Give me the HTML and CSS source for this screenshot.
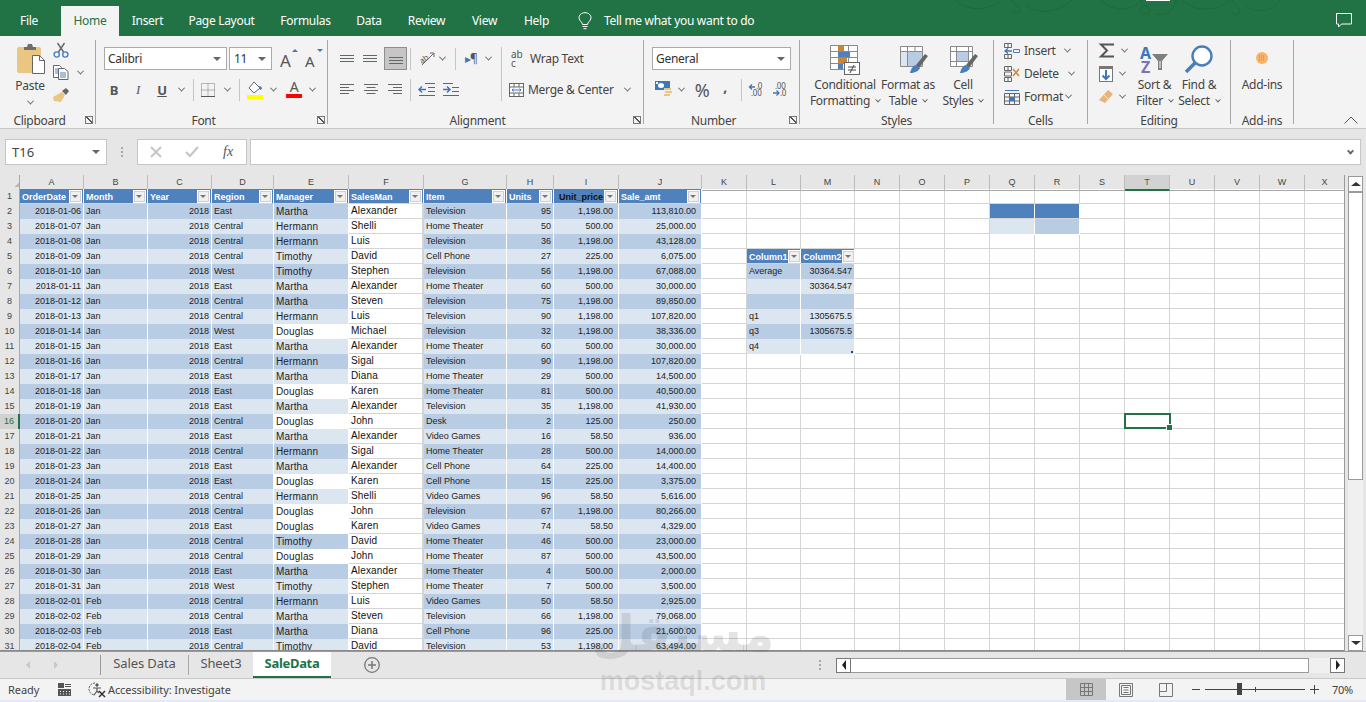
FILE: index.html
```html
<!DOCTYPE html>
<html lang="en">
<head>
<meta charset="utf-8">
<title>SaleData - Excel</title>
<link rel="stylesheet" href="styles.css">
</head>
<body>
<header class="titlebar">
  <nav class="tabs-top">
    <span class="tt">File</span><span class="tt on">Home</span><span class="tt">Insert</span><span class="tt">Page Layout</span><span class="tt">Formulas</span><span class="tt">Data</span><span class="tt">Review</span><span class="tt">View</span><span class="tt">Help</span>
  </nav>
  <div class="tell">
    <svg width="14" height="18" viewBox="0 0 14 18" fill="none" stroke="#fff"><path d="M4.5 12.5C4.5 10 1 9 1 5.8 1 2.8 3.6.7 7 .7s6 2.1 6 5.100C13 9 9.500 10 9.500 12.500ZM4.500 14.500h5M5.500 16.700h3"/></svg>
    <span>Tell me what you want to do</span>
  </div>
  <svg class="swirl" width="400" height="16" viewBox="0 0 400 16" fill="none" stroke="#1c6a3e"><path d="M6 0c8 10 28 12 44 2M62 0c2 6 8 6 8 10s-6 4-6 0M76 4c4 9 30 12 46-4M150 0c14 12 30 12 42 0M190 0c2 6 8 6 10 10 0 5-8 6-10 0 0-3 3-5 8-4M206 14c8 2 18-2 20-14M232 0c10 10 32 14 48 0M282 0c2 6 8 6 8 11s-8 4-8 0M296 6c10 8 28 6 34-6"/></svg>
  <i class="sliver"></i>
  <svg class="comment" width="16" height="15" viewBox="0 0 16 15" fill="none" stroke="#fff"><path d="M.5.500h15v10.500H5.500L2.500 14v-3h-2Z"/></svg>
</header>

<section class="ribbon">
  <div class="group g-clip">
    <div class="body clip-body">
      <div class="paste">
        <svg width="30" height="31" viewBox="0 0 30 31"><rect x="2" y="4" width="24" height="26" rx="2" fill="#e9c682"/><path d="M9 4h3l1-3h4l1 3h3v3H9Z" fill="#6e6e6e"/><path d="M17.500 12.500h7l5 5v13h-12Z" fill="#fff" stroke="#666"/><path d="M24.500 12.500v5h5" fill="none" stroke="#666"/></svg>
        <span>Paste</span><i class="car"></i>
      </div>
      <div class="stack clip-stack">
        <div class="si"><svg width="16" height="16" viewBox="0 0 16 16" fill="none"><path d="M4.500 1 10.500 10M11.500 1 5.500 10" stroke="#666" stroke-width="1.400"/><circle cx="3.700" cy="12.500" r="2.600" stroke="#4a7ebb" stroke-width="1.400"/><circle cx="12.300" cy="12.500" r="2.600" stroke="#4a7ebb" stroke-width="1.400"/></svg></div>
        <div class="si"><svg width="16" height="15" viewBox="0 0 16 15" fill="none" stroke="#666"><path d="M.5.500h6l2 2v10h-8Z" fill="#fff"/><path d="M5.500 3.500h6l3.500 3v8h-9.500Z" fill="#fff"/><path d="M7 8h6M7 10h6M7 12h6" stroke="#4a7ebb"/><path d="M2 4h3M2 6h3M2 8h3" stroke="#4a7ebb"/></svg><i class="car car-copy"></i></div>
        <div class="si"><svg width="17" height="15" viewBox="0 0 17 15"><path d="M9 4 12 7 8 14 1 13 0 9Z" fill="#e9c682"/><path d="M9 3 13 0l3 3-3 4Z" fill="#666"/></svg></div>
      </div>
    </div>
    <div class="glabel lb"><span></span><span>Clipboard</span><i class="launch"></i></div>
  </div>

  <div class="group g-font">
    <div class="body col-rows">
      <div class="r1 font-r1">
        <div class="sel"><span>Calibri</span><i class="tri"></i></div>
        <div class="sel"><span>11</span><i class="tri"></i></div>
        <span class="growA">A<i class="up"></i></span>
        <span class="growA small">A<i class="dn"></i></span>
      </div>
      <div class="r2 font-r2">
        <b class="fb">B</b><i class="fi">I</i><u class="fu">U</u><i class="car"></i><i class="vs"></i>
        <svg width="14" height="14" viewBox="0 0 14 14" fill="none" stroke="#777" stroke-dasharray="1 1"><path d="M.5.500h13v13H.5ZM7 .5v13M.5 7h13"/><path d="M0 13.500h14" stroke="#555" stroke-dasharray="none"/></svg><i class="car"></i><i class="vs"></i>
        <svg width="16" height="18" viewBox="0 0 16 18"><path d="M7 1 13 7 7 12 2 7Z" fill="#fff" stroke="#666"/><path d="M12 5c2 0 3 1 3 3l-2 1Z" fill="#4a7ebb"/><rect y="14" width="16" height="4" fill="#ffff00"/></svg><i class="car"></i>
        <span class="fcolor">A</span><i class="car"></i>
      </div>
    </div>
    <div class="glabel lb"><span></span><span>Font</span><i class="launch"></i></div>
  </div>

  <div class="group g-align">
    <div class="body align-body">
      <div class="col-rows align-left">
        <div class="r1 al-r1">
          <svg class="lines" width="14" height="8" viewBox="0 0 14 8"><path d="M0 .5h14M0 3.500h14M0 6.500h14" stroke="#666"/></svg>
          <svg class="lines" width="14" height="8" viewBox="0 0 14 8"><path d="M0 .5h14M0 3.500h14M0 6.500h14" stroke="#666"/></svg>
          <div class="pressed"><svg width="14" height="8" viewBox="0 0 14 8"><path d="M0 .5h14M0 3.500h14M0 6.500h14" stroke="#666"/></svg></div>
          <i class="vs"></i>
          <svg width="17" height="15" viewBox="0 0 17 15"><text x="1" y="10" transform="rotate(-35 7 7)" class="svgt">ab</text><path d="M4 14 15 3M12 2h4v4" fill="none" stroke="#666"/></svg>
          <i class="car"></i><i class="vs"></i>
          <span class="rtl"><span class="rtl-a">&#9656;</span>&para;</span><i class="car"></i>
        </div>
        <div class="r2 al-r2">
          <svg width="14" height="11" viewBox="0 0 14 11"><path d="M0 .5h14M0 3.500h9M0 6.500h14M0 9.500h9" stroke="#666"/></svg>
          <svg width="14" height="11" viewBox="0 0 14 11"><path d="M0 .5h14M2.500 3.500h9M0 6.500h14M2.500 9.500h9" stroke="#666"/></svg>
          <svg width="14" height="11" viewBox="0 0 14 11"><path d="M0 .5h14M5 3.500h9M0 6.500h14M5 9.500h9" stroke="#666"/></svg>
          <i class="vs"></i>
          <svg width="16" height="13" viewBox="0 0 16 13"><path d="M6 .5h10M9 4.500h7M9 8.500h7M0 12.500h16" stroke="#666"/><path d="M0 6.500h7M3 3.500l-3 3 3 3" fill="none" stroke="#3f78b8" stroke-width="1.500"/></svg>
          <svg width="16" height="13" viewBox="0 0 16 13"><path d="M0 .5h10M9 4.500h7M9 8.500h7M0 12.500h16" stroke="#666"/><path d="M0 6.500h7M4 3.500l3 3-3 3" fill="none" stroke="#3f78b8" stroke-width="1.500"/></svg>
        </div>
      </div>
      <i class="vs big"></i>
      <div class="col-rows align-right">
        <div class="r1 txtbtn"><span class="wrapi">ab<br>c</span><span>Wrap Text</span></div>
        <div class="r2 txtbtn mergebtn"><svg width="15" height="14" viewBox="0 0 15 14" fill="none" stroke="#666"><rect x=".5" y=".5" width="14" height="13" fill="#fff"/><path d="M.5 4h14M.5 10h14M5 .5V4M10 .5V4M5 10v3.500M10 10v3.500"/><path d="M3 7h9M4.500 5.500 3 7l1.500 1.500M10.500 5.500 12 7l-1.500 1.500" stroke="#3f78b8"/></svg><span>Merge &amp; Center</span><i class="car"></i></div>
      </div>
    </div>
    <div class="glabel lb"><span></span><span>Alignment</span><i class="launch"></i></div>
  </div>

  <div class="group g-num">
    <div class="body col-rows">
      <div class="r1"><div class="sel numsel"><span>General</span><i class="tri"></i></div></div>
      <div class="r2 num-r2">
        <svg width="17" height="17" viewBox="0 0 17 17"><rect width="15" height="9" fill="#3f78b8"/><ellipse cx="6" cy="4.500" rx="3" ry="2.500" fill="#fff"/><rect x="1" y="1" width="2" height="2" fill="#fff"/><path d="M9 7h7v2H9ZM10 10h7v2h-7ZM9 13h6v2H9Z" fill="#e9c682"/></svg>
        <i class="car"></i><span class="pct">%</span><b class="cma">,</b><i class="vs"></i>
        <svg width="15" height="14" viewBox="0 0 15 14"><text x="7" y="6" class="svgt">.0</text><text x="2" y="13" class="svgt">.00</text><path d="M0 4h6M3 1.500.5 4 3 6.500" fill="none" stroke="#3f78b8" stroke-width="1.300"/></svg>
        <svg width="15" height="14" viewBox="0 0 15 14"><text x="2" y="6" class="svgt">.00</text><text x="7" y="13" class="svgt">.0</text><path d="M0 10h6M3.500 7.500 6 10l-2.500 2.500" fill="none" stroke="#3f78b8" stroke-width="1.300"/></svg>
      </div>
    </div>
    <div class="glabel lb"><span></span><span>Number</span><i class="launch"></i></div>
  </div>

  <div class="group g-styles">
    <div class="body big-row">
      <div class="big b-cond">
        <svg width="30" height="30" viewBox="0 0 30 30"><path d="M.5.500h27v24H.5ZM9.500.5v24M18.500.5v24M.5 6.500h27M.5 12.500h27M.5 18.500h27" fill="#fff" stroke="#8a8a8a"/><rect x="8" y="1" width="6" height="5" fill="#c8863c"/><rect x="8" y="7" width="12" height="5" fill="#4f81bd"/><rect x="8" y="13" width="9" height="5" fill="#c8863c"/><rect x="8" y="19" width="5" height="5" fill="#4f81bd"/><rect x="14.500" y="17.500" width="15" height="12" fill="#fff" stroke="#666"/><path d="M18 22h8M18 25h8M24 20l-4 8" stroke="#444" fill="none"/></svg>
        <span>Conditional</span><span>Formatting<i class="car"></i></span>
      </div>
      <div class="big b-table">
        <svg width="30" height="30" viewBox="0 0 30 30"><path d="M2.500 1.500h22v20h-22ZM9.500 1.500v20M17 1.500v20M2.500 6.500h22M2.500 11.500h22M2.500 16.500h22" fill="#fff" stroke="#8a8a8a"/><rect x="10" y="7" width="14" height="14" fill="#b8cce4"/><rect x="3" y="7" width="6" height="14" fill="#dce6f1"/><path d="M18 20 27 9l3 2-9 12Z" fill="#666"/><path d="M18 20c-2 0-5 3-6 8 4 0 9-2 10-5Z" fill="#4a7ebb"/></svg>
        <span>Format as</span><span>Table<i class="car"></i></span>
      </div>
      <div class="big b-cell">
        <svg width="30" height="30" viewBox="0 0 30 30"><path d="M2.500 1.500h22v20h-22Z" fill="#fff" stroke="#8a8a8a"/><path d="M2.500 6.500h22M2.500 16.500h22M8.500 1.500v20M20.500 1.500v20" stroke="#8a8a8a"/><rect x="9" y="7" width="11" height="9" fill="#b8cce4"/><path d="M18 20 27 9l3 2-9 12Z" fill="#666"/><path d="M18 20c-2 0-5 3-6 8 4 0 9-2 10-5Z" fill="#4a7ebb"/></svg>
        <span>Cell</span><span>Styles<i class="car"></i></span>
      </div>
    </div>
    <div class="glabel"><span></span><span>Styles</span><span></span></div>
  </div>

  <div class="group g-cells">
    <div class="body stack cells-stack">
      <div class="si"><svg width="16" height="16" viewBox="0 0 16 16" fill="none" stroke="#666"><path d="M.5.500h7v4h-7ZM.5 11.500h7v4h-7ZM4 .5v4M4 11.500v4"/><path d="M9.500 6.500h6v3h-6Z" stroke="#4a7ebb"/><path d="M1 8h7M4 5.500 1 8l3 2.500" stroke="#3f78b8" stroke-width="1.300"/></svg><span>Insert</span><i class="car c-ins"></i></div>
      <div class="si"><svg width="16" height="16" viewBox="0 0 16 16" fill="none" stroke="#666"><path d="M.5.500h7v4h-7ZM.5 11.500h7v4h-7ZM4 .5v4M4 11.500v4M.5 6h7v4h-7Z"/><path d="M9 3l6 7M15 3l-6 7" stroke="#d5843a" stroke-width="1.500"/></svg><span>Delete</span><i class="car c-del"></i></div>
      <div class="si"><svg width="16" height="16" viewBox="0 0 16 16" fill="none" stroke="#666"><path d="M.5 4.500h15v11H.5ZM.5 8h15M.5 12h15M5.500 4.500v11M10.500 4.500v11"/><rect x="5" y="8" width="6" height="4" fill="#3f78b8" stroke="none"/><path d="M1 1.500h14" stroke="#3f78b8"/></svg><span>Format</span><i class="car c-fmt"></i></div>
    </div>
    <div class="glabel"><span></span><span>Cells</span><span></span></div>
  </div>

  <div class="group g-edit">
    <div class="body big-row">
      <div class="stack edit-stack">
        <div class="si"><svg width="16" height="15" viewBox="0 0 16 15" fill="none"><path d="M15 1.500H2L8 7.500 2 13.500H15" stroke="#555" stroke-width="2"/></svg><i class="car c-sum"></i></div>
        <div class="si"><svg width="14" height="16" viewBox="0 0 14 16"><rect width="14" height="4" fill="#777"/><rect x=".5" y="2.500" width="13" height="13" fill="#fff" stroke="#777"/><path d="M7 4v9M3.500 9.500 7 13l3.500-3.500" fill="none" stroke="#3f78b8" stroke-width="2"/></svg><i class="car c-fil"></i></div>
        <div class="si"><svg width="14" height="14" viewBox="0 0 14 14"><path d="M9 0 14 4 6 13 0 10Z" fill="#e8b47e"/><path d="M5 5 9 9" stroke="#f3f3f3"/></svg><i class="car c-fil"></i></div>
      </div>
      <div class="big b-sort">
        <svg width="32" height="30" viewBox="0 0 32 30"><text x="1" y="14" class="az a">A</text><text x="2" y="28" class="az z">Z</text><path d="M13 9h16l-6 7v9h-4v-9Z" fill="#7f7f7f"/><path d="M21 16v7" stroke="#fff"/></svg>
        <span>Sort &amp;</span><span>Filter<i class="car"></i></span>
      </div>
      <div class="big b-find">
        <svg width="30" height="30" viewBox="0 0 30 30" fill="none" stroke="#4a7ebb"><circle cx="18" cy="11" r="9.500" stroke-width="2.400" fill="#fff"/><path d="M11 18 2 27" stroke-width="3.500"/></svg>
        <span>Find &amp;</span><span>Select<i class="car"></i></span>
      </div>
    </div>
    <div class="glabel"><span></span><span>Editing</span><span></span></div>
  </div>

  <div class="group g-add">
    <div class="body big-row">
      <div class="big b-add">
        <svg width="30" height="30" viewBox="0 0 30 30"><circle cx="15" cy="13" r="6" fill="#f9b366"/><path d="M12 11h6M12 13h6M12 15h6" stroke="#d5843a" stroke-dasharray="1 1"/></svg>
        <span>Add-ins</span>
      </div>
    </div>
    <div class="glabel"><span></span><span>Add-ins</span><span></span></div>
  </div>

  <svg class="collapse" width="14" height="8" viewBox="0 0 14 8" fill="none" stroke="#555"><path d="M.5 7.500 7 1l6.500 6.500"/></svg>
</section>

<section class="fbar">
  <div class="namebox"><span>T16</span><i class="tri"></i></div>
  <div class="dots"><i></i><i></i><i></i></div>
  <div class="fxbox">
    <svg width="12" height="12" viewBox="0 0 12 12" stroke="#c4c4c4" stroke-width="1.800"><path d="M1 1l10 10M11 1 1 11"/></svg>
    <svg width="14" height="12" viewBox="0 0 14 12" fill="none" stroke="#c4c4c4" stroke-width="2"><path d="M1 6l4 4 8-9"/></svg>
    <em>fx</em>
  </div>
  <div class="finput"><i class="car"></i></div>
</section>

<section class="sheet">
  <div class="grid">
    <div class="row head">
      <span class="rh corner"></span><span class="ch">A</span><span class="ch">B</span><span class="ch">C</span><span class="ch">D</span><span class="ch">E</span><span class="ch">F</span><span class="ch">G</span><span class="ch">H</span><span class="ch">I</span><span class="ch">J</span><span class="ch">K</span><span class="ch">L</span><span class="ch">M</span><span class="ch">N</span><span class="ch">O</span><span class="ch">P</span><span class="ch">Q</span><span class="ch">R</span><span class="ch">S</span><span class="ch act">T</span><span class="ch">U</span><span class="ch">V</span><span class="ch">W</span><span class="ch">X</span>
    </div>
    <div class="row r-top">
      <b class="rh">1</b><span class="th"><span>OrderDate</span><i class="fb-btn"></i></span><span class="th"><span>Month</span><i class="fb-btn"></i></span><span class="th"><span>Year</span><i class="fb-btn"></i></span><span class="th"><span>Region</span><i class="fb-btn"></i></span><span class="th"><span>Manager</span><i class="fb-btn"></i></span><span class="th"><span>SalesMan</span><i class="fb-btn"></i></span><span class="th"><span>Item</span><i class="fb-btn"></i></span><span class="th"><span>Units</span><i class="fb-btn"></i></span><span class="th dk"><span>Unit_price</span><i class="fb-btn"></i></span><span class="th"><span>Sale_amt</span><i class="fb-btn"></i></span>
    </div>
    <div class="row d"><b class="rh">2</b><span class="c n">2018-01-06</span><span class="c">Jan</span><span class="c n">2018</span><span class="c">East</span><span class="c e">Martha</span><span class="c f">Alexander</span><span class="c">Television</span><span class="c n">95</span><span class="c n p">1,198.00</span><span class="c n p">113,810.00</span><span class="x cq hd"></span><span class="x cr hd"></span></div>
    <div class="row l"><b class="rh">3</b><span class="c n">2018-01-07</span><span class="c">Jan</span><span class="c n">2018</span><span class="c">Central</span><span class="c e">Hermann</span><span class="c f">Shelli</span><span class="c">Home Theater</span><span class="c n">50</span><span class="c n p">500.00</span><span class="c n p">25,000.00</span><span class="x cq lt"></span><span class="x cr dkb"></span></div>
    <div class="row d"><b class="rh">4</b><span class="c n">2018-01-08</span><span class="c">Jan</span><span class="c n">2018</span><span class="c">Central</span><span class="c e">Hermann</span><span class="c f">Luis</span><span class="c">Television</span><span class="c n">36</span><span class="c n p">1,198.00</span><span class="c n p">43,128.00</span></div>
    <div class="row l"><b class="rh">5</b><span class="c n">2018-01-09</span><span class="c">Jan</span><span class="c n">2018</span><span class="c">Central</span><span class="c e">Timothy</span><span class="c f">David</span><span class="c">Cell Phone</span><span class="c n">27</span><span class="c n p">225.00</span><span class="c n p">6,075.00</span><span class="x cl th"><span>Column1</span><i class="fb-btn"></i></span><span class="x cm th"><span>Column2</span><i class="fb-btn"></i></span></div>
    <div class="row d"><b class="rh">6</b><span class="c n">2018-01-10</span><span class="c">Jan</span><span class="c n">2018</span><span class="c">West</span><span class="c e">Timothy</span><span class="c f">Stephen</span><span class="c">Television</span><span class="c n">56</span><span class="c n p">1,198.00</span><span class="c n p">67,088.00</span><span class="x cl dkb t">Average</span><span class="x cm dkb t n">30364.547</span></div>
    <div class="row l"><b class="rh">7</b><span class="c n">2018-01-11</span><span class="c">Jan</span><span class="c n">2018</span><span class="c">East</span><span class="c e">Martha</span><span class="c f">Alexander</span><span class="c">Home Theater</span><span class="c n">60</span><span class="c n p">500.00</span><span class="c n p">30,000.00</span><span class="x cl lt t"></span><span class="x cm lt t n">30364.547</span></div>
    <div class="row d"><b class="rh">8</b><span class="c n">2018-01-12</span><span class="c">Jan</span><span class="c n">2018</span><span class="c">Central</span><span class="c e">Martha</span><span class="c f">Steven</span><span class="c">Television</span><span class="c n">75</span><span class="c n p">1,198.00</span><span class="c n p">89,850.00</span><span class="x cl dkb t"></span><span class="x cm dkb t"></span></div>
    <div class="row l"><b class="rh">9</b><span class="c n">2018-01-13</span><span class="c">Jan</span><span class="c n">2018</span><span class="c">Central</span><span class="c e">Hermann</span><span class="c f">Luis</span><span class="c">Television</span><span class="c n">90</span><span class="c n p">1,198.00</span><span class="c n p">107,820.00</span><span class="x cl lt t">q1</span><span class="x cm lt t n">1305675.5</span></div>
    <div class="row d"><b class="rh">10</b><span class="c n">2018-01-14</span><span class="c">Jan</span><span class="c n">2018</span><span class="c">West</span><span class="c e w">Douglas</span><span class="c f">Michael</span><span class="c">Television</span><span class="c n">32</span><span class="c n p">1,198.00</span><span class="c n p">38,336.00</span><span class="x cl dkb t">q3</span><span class="x cm dkb t n">1305675.5</span></div>
    <div class="row l"><b class="rh">11</b><span class="c n">2018-01-15</span><span class="c">Jan</span><span class="c n">2018</span><span class="c">East</span><span class="c e">Martha</span><span class="c f">Alexander</span><span class="c">Home Theater</span><span class="c n">60</span><span class="c n p">500.00</span><span class="c n p">30,000.00</span><span class="x cl lt t">q4</span><span class="x cm lt t grip"></span></div>
    <div class="row d"><b class="rh">12</b><span class="c n">2018-01-16</span><span class="c">Jan</span><span class="c n">2018</span><span class="c">Central</span><span class="c e">Hermann</span><span class="c f">Sigal</span><span class="c">Television</span><span class="c n">90</span><span class="c n p">1,198.00</span><span class="c n p">107,820.00</span></div>
    <div class="row l"><b class="rh">13</b><span class="c n">2018-01-17</span><span class="c">Jan</span><span class="c n">2018</span><span class="c">East</span><span class="c e">Martha</span><span class="c f">Diana</span><span class="c">Home Theater</span><span class="c n">29</span><span class="c n p">500.00</span><span class="c n p">14,500.00</span></div>
    <div class="row d"><b class="rh">14</b><span class="c n">2018-01-18</span><span class="c">Jan</span><span class="c n">2018</span><span class="c">East</span><span class="c e w">Douglas</span><span class="c f">Karen</span><span class="c">Home Theater</span><span class="c n">81</span><span class="c n p">500.00</span><span class="c n p">40,500.00</span></div>
    <div class="row l"><b class="rh">15</b><span class="c n">2018-01-19</span><span class="c">Jan</span><span class="c n">2018</span><span class="c">East</span><span class="c e">Martha</span><span class="c f">Alexander</span><span class="c">Television</span><span class="c n">35</span><span class="c n p">1,198.00</span><span class="c n p">41,930.00</span></div>
    <div class="row d"><b class="rh act">16</b><span class="c n">2018-01-20</span><span class="c">Jan</span><span class="c n">2018</span><span class="c">Central</span><span class="c e w">Douglas</span><span class="c f">John</span><span class="c">Desk</span><span class="c n">2</span><span class="c n p">125.00</span><span class="c n p">250.00</span><span class="x ct selcell"></span></div>
    <div class="row l"><b class="rh">17</b><span class="c n">2018-01-21</span><span class="c">Jan</span><span class="c n">2018</span><span class="c">East</span><span class="c e">Martha</span><span class="c f">Alexander</span><span class="c">Video Games</span><span class="c n">16</span><span class="c n p">58.50</span><span class="c n p">936.00</span></div>
    <div class="row d"><b class="rh">18</b><span class="c n">2018-01-22</span><span class="c">Jan</span><span class="c n">2018</span><span class="c">Central</span><span class="c e">Hermann</span><span class="c f">Sigal</span><span class="c">Home Theater</span><span class="c n">28</span><span class="c n p">500.00</span><span class="c n p">14,000.00</span></div>
    <div class="row l"><b class="rh">19</b><span class="c n">2018-01-23</span><span class="c">Jan</span><span class="c n">2018</span><span class="c">East</span><span class="c e">Martha</span><span class="c f">Alexander</span><span class="c">Cell Phone</span><span class="c n">64</span><span class="c n p">225.00</span><span class="c n p">14,400.00</span></div>
    <div class="row d"><b class="rh">20</b><span class="c n">2018-01-24</span><span class="c">Jan</span><span class="c n">2018</span><span class="c">East</span><span class="c e w">Douglas</span><span class="c f">Karen</span><span class="c">Cell Phone</span><span class="c n">15</span><span class="c n p">225.00</span><span class="c n p">3,375.00</span></div>
    <div class="row l"><b class="rh">21</b><span class="c n">2018-01-25</span><span class="c">Jan</span><span class="c n">2018</span><span class="c">Central</span><span class="c e">Hermann</span><span class="c f">Shelli</span><span class="c">Video Games</span><span class="c n">96</span><span class="c n p">58.50</span><span class="c n p">5,616.00</span></div>
    <div class="row d"><b class="rh">22</b><span class="c n">2018-01-26</span><span class="c">Jan</span><span class="c n">2018</span><span class="c">Central</span><span class="c e w">Douglas</span><span class="c f">John</span><span class="c">Television</span><span class="c n">67</span><span class="c n p">1,198.00</span><span class="c n p">80,266.00</span></div>
    <div class="row l"><b class="rh">23</b><span class="c n">2018-01-27</span><span class="c">Jan</span><span class="c n">2018</span><span class="c">East</span><span class="c e w">Douglas</span><span class="c f">Karen</span><span class="c">Video Games</span><span class="c n">74</span><span class="c n p">58.50</span><span class="c n p">4,329.00</span></div>
    <div class="row d"><b class="rh">24</b><span class="c n">2018-01-28</span><span class="c">Jan</span><span class="c n">2018</span><span class="c">Central</span><span class="c e">Timothy</span><span class="c f">David</span><span class="c">Home Theater</span><span class="c n">46</span><span class="c n p">500.00</span><span class="c n p">23,000.00</span></div>
    <div class="row l"><b class="rh">25</b><span class="c n">2018-01-29</span><span class="c">Jan</span><span class="c n">2018</span><span class="c">Central</span><span class="c e w">Douglas</span><span class="c f">John</span><span class="c">Home Theater</span><span class="c n">87</span><span class="c n p">500.00</span><span class="c n p">43,500.00</span></div>
    <div class="row d"><b class="rh">26</b><span class="c n">2018-01-30</span><span class="c">Jan</span><span class="c n">2018</span><span class="c">East</span><span class="c e">Martha</span><span class="c f">Alexander</span><span class="c">Home Theater</span><span class="c n">4</span><span class="c n p">500.00</span><span class="c n p">2,000.00</span></div>
    <div class="row l"><b class="rh">27</b><span class="c n">2018-01-31</span><span class="c">Jan</span><span class="c n">2018</span><span class="c">West</span><span class="c e">Timothy</span><span class="c f">Stephen</span><span class="c">Home Theater</span><span class="c n">7</span><span class="c n p">500.00</span><span class="c n p">3,500.00</span></div>
    <div class="row d"><b class="rh">28</b><span class="c n">2018-02-01</span><span class="c">Feb</span><span class="c n">2018</span><span class="c">Central</span><span class="c e">Hermann</span><span class="c f">Luis</span><span class="c">Video Games</span><span class="c n">50</span><span class="c n p">58.50</span><span class="c n p">2,925.00</span></div>
    <div class="row l"><b class="rh">29</b><span class="c n">2018-02-02</span><span class="c">Feb</span><span class="c n">2018</span><span class="c">Central</span><span class="c e">Martha</span><span class="c f">Steven</span><span class="c">Television</span><span class="c n">66</span><span class="c n p">1,198.00</span><span class="c n p">79,068.00</span></div>
    <div class="row d"><b class="rh">30</b><span class="c n">2018-02-03</span><span class="c">Feb</span><span class="c n">2018</span><span class="c">East</span><span class="c e">Martha</span><span class="c f">Diana</span><span class="c">Cell Phone</span><span class="c n">96</span><span class="c n p">225.00</span><span class="c n p">21,600.00</span></div>
    <div class="row l"><b class="rh">31</b><span class="c n">2018-02-04</span><span class="c">Feb</span><span class="c n">2018</span><span class="c">Central</span><span class="c e">Timothy</span><span class="c f">David</span><span class="c">Television</span><span class="c n">53</span><span class="c n p">1,198.00</span><span class="c n p">63,494.00</span></div>
  </div>
  <div class="vscroll">
    <div class="sbtn"><i class="ar-up"></i></div>
    <div class="thumb"></div>
    <div class="strack"></div>
    <div class="sbtn"><i class="ar-dn"></i></div>
  </div>
</section>

<section class="sheettabs">
  <div class="navs"><i class="nl"></i><i class="nr"></i></div>
  <span class="st first">Sales Data</span>
  <span class="st">Sheet3</span>
  <span class="st cur">SaleData</span>
  <svg class="plus" width="16" height="16" viewBox="0 0 16 16" fill="none" stroke="#777"><circle cx="8" cy="8" r="7.300" stroke-width="1.300"/><path d="M8 4v8M4 8h8" stroke-width="1.500"/></svg>
  <div class="dots hdots"><i></i><i></i><i></i></div>
  <div class="hscroll">
    <div class="hbtn"><i class="ar-l"></i></div>
    <div class="hthumb"></div>
    <div class="htrack"></div>
    <div class="hbtn"><i class="ar-r"></i></div>
  </div>
</section>

<footer class="status">
  <span class="ready">Ready</span>
  <svg class="macro" width="13" height="13" viewBox="0 0 13 13"><path d="M0 0h6v5H0Z" fill="#555"/><path d="M7 1h6v1H7ZM7 3h6v1H7ZM0 6h13v7H0Z" fill="#555"/><path d="M2 8h1v1H2ZM5 8h1v1H5ZM8 8h1v1H8ZM11 8h1v1h-1ZM2 10.500h1v1H2ZM5 10.500h1v1H5ZM8 10.500h1v1H8ZM11 10.500h1v1h-1Z" fill="#f3f3f3"/></svg>
  <svg class="acc" width="17" height="15" viewBox="0 0 17 15" fill="none" stroke="#555"><path d="M6 1A6 6 0 1 0 6 13" stroke-dasharray="2 1"/><circle cx="8" cy="3" r="1.200" fill="#555"/><path d="M4 6h8M8 6v3l-3 4M8 9l2 2" stroke-width="1.200"/><path d="M10 9l6 6M16 9l-6 6" stroke="#333" stroke-width="1.500"/></svg>
  <span class="accs">Accessibility: Investigate</span>
  <div class="views">
    <span class="vb on"><svg width="13" height="13" viewBox="0 0 13 13" fill="none" stroke="#777"><path d="M.5.500h12v12H.5ZM4.500.5v12M8.500.5v12M.5 4.500h12M.5 8.500h12"/></svg></span>
    <span class="vb"><svg width="14" height="14" viewBox="0 0 14 14" fill="none" stroke="#777"><path d="M.5.500h13v13H.5ZM2.500 2.500h9v9h-9ZM4.500 4.500h5M4.500 7h5M4.500 9.500h5"/></svg></span>
    <span class="vb"><svg width="14" height="14" viewBox="0 0 14 14" fill="none" stroke="#777"><path d="M.5.500h13v13H.5ZM.5 8.500h7V.5"/></svg></span>
  </div>
  <div class="zoom">
    <i class="zm"></i>
    <div class="ztrack"><i class="zknob"></i><i class="ztick"></i></div>
    <i class="zp"></i>
    <span>70%</span>
  </div>
</footer>
<div class="foot"></div>

<div class="wm"><span class="wm-ar" lang="ar" dir="rtl">مستقل</span><span class="wm-en">mostaql.com</span></div>
</body>
</html>
```
FILE: styles.css
```css
*{box-sizing:border-box}
html,body{margin:0;height:702px;overflow:hidden}
body{position:relative;width:1366px;background:#e6e6e6;font:12px/16px "Noto Sans","Open Sans",sans-serif;color:#444}
i{font-style:normal;display:block}
svg{display:block;flex:none;overflow:visible}

/* title bar */
.titlebar{position:relative;height:36px;background:#217346;display:flex;color:#fff;letter-spacing:-.3px}
.tabs-top{display:grid;grid-template-columns:61px 58px 57px 91px 77px 50px 65px 51px 53px;padding-top:6px;height:36px}
.tt{display:flex;align-items:center;justify-content:center;height:30px;padding-bottom:1px}
.tt:first-child{padding-right:3px}
.tt.on{background:#f3f3f3;color:#217346}
.tell{display:flex;align-items:center;gap:12px;margin-left:15px;padding-top:6px;height:36px}
.swirl{position:absolute;left:950px;top:0}
.sliver{position:absolute;left:1146px;top:0;width:24px;height:1px;background:#fff}
.comment{position:absolute;left:1336px;top:13px}

/* ribbon */
.ribbon{display:flex;height:93px;background:#f3f3f3;border-bottom:1px solid #c6c6c6;padding:4px 0;color:#444;letter-spacing:-.28px}
.group{display:flex;flex-direction:column;height:84px;border-right:1px solid #a8a8a8}
.body{flex:1;min-height:0}
.glabel{height:14px;display:grid;grid-template-columns:1fr auto 1fr;align-items:end;line-height:14px;margin-bottom:-3px;padding-top:1px}
.glabel.lb{grid-template-columns:1fr auto 1fr 16px}
.launch{grid-column:4;justify-self:end;width:8px;height:8px;border:1px solid #777;margin:0 2px 4px 0;background:linear-gradient(45deg,transparent 45%,#555 45% 60%,transparent 60%)}
.g-clip{width:96px}.g-font{width:232px}.g-align{width:316px}.g-num{width:156px}.g-styles{width:194px}.g-cells{width:94px}.g-edit{width:143px}.g-add{width:63px}
.collapse{margin:76px 0 0 50px}
.car{width:5px;height:5px;border-right:1px solid #666;border-bottom:1px solid #666;transform:rotate(45deg) translate(-1px,-1px);flex:none}
.vs{width:1px;height:22px;background:#c6c6c6;justify-self:center}
.vs.big{height:54px;margin:7px 0 0 3px}
.tri{width:0;height:0;border:4px solid transparent;border-top:4px solid #666;border-bottom:0}

.clip-body{display:flex;padding-left:15px}
.paste{width:30px;display:flex;flex-direction:column;align-items:center;padding-top:3px}
.paste span{margin-top:4px;height:16px}
.paste .car{margin-top:6px}
.stack{display:flex;flex-direction:column;margin-top:-1px}
.si{height:23px;display:flex;align-items:center}
.clip-stack{margin-left:8px;margin-top:-2px}
.car-copy{margin-left:9px}

.col-rows{display:flex;flex-direction:column;gap:8px;padding-top:7px}
.g-font .col-rows,.g-num .col-rows{padding-left:8px}
.r1{display:flex;height:23px;align-items:center}
.r2{display:grid;height:23px;align-items:center;justify-items:center}
.sel{height:23px;background:#fff;border:1px solid #ababab;display:flex;align-items:center;justify-content:space-between;padding:0 5px 0 3px;color:#333}
.font-r1 .sel:nth-child(1){width:123px;margin-right:2px}
.font-r1 .sel:nth-child(2){width:43px;padding-left:4px}
.growA{font-size:17px;color:#555;position:relative;margin-left:8px;width:14px;padding-top:4px}
.growA.small{font-size:15px;margin-left:11px}
.up,.dn{position:absolute;right:-4px;top:0;border:3px solid transparent;border-top:0;border-bottom:3px solid #3f78b8}
.dn{border-bottom:0;border-top:3px solid #3f78b8}
.font-r2{grid-template-columns:20px 28px 20px 18px 6px 24px 14px 10px 22px 14px 28px 8px}
.fb{font:bold 13px "Noto Sans",sans-serif;color:#555}
.fi{font:italic 13px "Liberation Serif",serif;color:#555}
.fu{font:bold 13px "Noto Sans",sans-serif;color:#555}
.fcolor{display:block;font:14px/14px "Noto Sans",sans-serif;color:#555;width:16px;text-align:center;border-bottom:4px solid #f00;height:18px;margin-top:-2px}
.svgt{font:8px "Noto Sans",sans-serif;fill:#555}

.align-body{display:flex}
.align-left{padding-left:10px;width:170px}
.al-r1{display:grid;grid-template-columns:18px 28px 23px 7px 24px 8px 18px 14px 20px;justify-items:center;align-items:center}
.al-r2{grid-template-columns:18px 30px 18px 12px 22px 26px;justify-items:center}
.pressed{width:23px;height:23px;background:#c6c6c6;border:1px solid #8e8e8e;display:flex;align-items:flex-end;justify-content:center;padding-bottom:4px}
.rtl{font-size:12px;color:#555;letter-spacing:-1px}
.rtl-a{color:#3f78b8}
.align-right{padding-left:7px}
.txtbtn{display:flex;align-items:center;gap:4px;height:23px;color:#444}
.wrapi{width:15px;font-size:10px;line-height:9px;margin-left:2px;color:#555;letter-spacing:0}
.mergebtn{display:flex}
.mergebtn .car{margin-left:7px}

.numsel{width:139px}
.num-r2{grid-template-columns:22px 14px 28px 18px 14px 16px 32px}
.pct{font-size:18px;color:#555}
.cma{font:bold 14px/12px "Noto Sans",sans-serif;color:#555;padding-bottom:6px}

.big-row{display:flex}
.g-styles .big-row{padding-left:10px}
.big{display:flex;flex-direction:column;align-items:center;padding-top:5px;white-space:nowrap}
.big svg{height:30px;margin-bottom:2px}
.big span{height:16px;display:flex;align-items:center;gap:6px}
.big .car{width:4px;height:4px}
.b-cond{width:70px}.b-table{width:56px}.b-cell{width:54px}
.b-table svg{margin-left:10px}
.cells-stack{padding-left:10px}
.cells-stack .si svg{margin-right:4px}
.c-ins{margin-left:9px}.c-del{margin-left:10px}.c-fmt{margin-left:3px}
.edit-stack{padding-left:10px;width:43px}
.edit-stack .si svg{margin-left:1px}
.c-sum{margin-left:7px}.c-fil{margin-left:7px}
.b-sort{width:47px}.b-find{width:42px}
.az{font:bold 16px "Noto Sans",sans-serif}
.az.a{fill:#3f78b8}.az.z{fill:#7b72b8}
.b-add{width:62px}

/* formula bar */
.fbar{height:41px;display:flex;padding:10px 5px 5px;background:#e6e6e6}
.namebox,.fxbox,.finput{height:26px;background:#fff;border:1px solid #c6c6c6}
.namebox{width:102px;display:flex;align-items:center;justify-content:space-between;padding:0 6px;color:#444;font-size:13px}
.dots{width:30px;display:flex;flex-direction:column;gap:2px;align-items:center;justify-content:center}
.dots i{width:2px;height:2px;background:#a8a8a8}
.fxbox{width:110px;display:flex;align-items:center;padding-left:12px;gap:24px}
.fxbox svg:nth-child(2){margin-left:-1px}
.fxbox em{font:italic 14px "Liberation Serif",serif;color:#555;margin-left:0}
.finput{flex:1;margin-left:3px;display:flex;align-items:center;justify-content:flex-end;padding-right:7px}
.finput .car{border-width:0 2px 2px 0;border-color:#666}

/* sheet */
.sheet{height:481px;display:flex;padding-top:5px}
.grid{width:1345px;height:476px;overflow:hidden;border-right:1px solid #9a9a9a;border-bottom:1px solid #8a8a8a;
  background:
   linear-gradient(#d4d4d4,#d4d4d4) 746px 0/1px 100% no-repeat,
   linear-gradient(#d4d4d4,#d4d4d4) 800px 0/1px 100% no-repeat,
   linear-gradient(#d4d4d4,#d4d4d4) 854px 0/1px 100% no-repeat,
   linear-gradient(#d4d4d4,#d4d4d4) 899px 0/1px 100% no-repeat,
   linear-gradient(#d4d4d4,#d4d4d4) 944px 0/1px 100% no-repeat,
   linear-gradient(#d4d4d4,#d4d4d4) 989px 0/1px 100% no-repeat,
   linear-gradient(#d4d4d4,#d4d4d4) 1034px 0/1px 100% no-repeat,
   linear-gradient(#d4d4d4,#d4d4d4) 1079px 0/1px 100% no-repeat,
   linear-gradient(#d4d4d4,#d4d4d4) 1124px 0/1px 100% no-repeat,
   linear-gradient(#d4d4d4,#d4d4d4) 1169px 0/1px 100% no-repeat,
   linear-gradient(#d4d4d4,#d4d4d4) 1214px 0/1px 100% no-repeat,
   linear-gradient(#d4d4d4,#d4d4d4) 1259px 0/1px 100% no-repeat,
   linear-gradient(#d4d4d4,#d4d4d4) 1304px 0/1px 100% no-repeat,
   linear-gradient(to bottom,transparent 14px,#d4d4d4 14px) 0 14px/100% 15px repeat-y,
   #fff}
.row{display:grid;height:15px;grid-template-columns:20px 64px 64px 64px 62px 75px 75px 83px 47px 65px 83px 45px 54px 54px repeat(10,45px) 40px;font:9px/14px "Liberation Sans",sans-serif;color:#222}
.row.head{height:14px;background:#e6e6e6;color:#444}
.rh{display:block;background:#e6e6e6;border-right:1px solid #a8a8a8;border-bottom:1px solid #bdbdbd;text-align:center;font-weight:400;color:#444;line-height:15px}
.rh.act{background:#d2d2d2;color:#217346;border-right:2px solid #217346}
.corner{border-bottom:1px solid #a8a8a8;background:linear-gradient(135deg,#e6e6e6 70%,#b8b8b8 70%) 12px 4px/7px 8px no-repeat,#e6e6e6}
.ch{display:block;text-align:center;line-height:14px;border-right:1px solid #bcbcbc;border-bottom:1px solid #a8a8a8}
.ch.act{background:#d2d2d2;color:#217346;border-bottom:2px solid #217346}
.c,.x.t{display:block;padding:0 2px;white-space:nowrap;overflow:hidden;border-right:1px solid #fff;border-bottom:1px solid #fff}
.d .c{background:#b8cce4}
.l .c{background:#dce6f1}
.row .c.f,.row .c.w{background:#fff}
.row .c.f{border-right:2px solid #d4d4d4;border-bottom:2px solid #d4d4d4;font-size:10px;line-height:13px;padding-left:2px;letter-spacing:.15px;color:#111}
.row .c.e{font-size:10px;line-height:15px;letter-spacing:.15px;color:#222}
.n{text-align:right}
.c.p{padding-right:5px}
.th{display:flex;justify-content:space-between;align-items:center;background:#4f81bd;color:#fff;font-weight:700;padding:0 1px 0 2px;height:14px;border-right:1px solid #fff;overflow:hidden}
.th span{padding-top:2px}
.th.dk{color:#111;padding-left:5px}
.fb-btn{width:13px;height:13px;background:#f0f0f0;border:1px solid #fff;outline:1px solid #d0d0d0;outline-offset:-2px;flex:none;position:relative}
.fb-btn::after{content:"";position:absolute;left:2px;top:4px;border:3px solid transparent;border-top:3px solid #777;border-bottom:0}
.x{grid-row:1}
.cl{grid-column:13}.cm{grid-column:14}.cq{grid-column:18}.cr{grid-column:19}.ct{grid-column:21}
.hd{background:#4f81bd;border-right:1px solid #fff;height:14px}
.lt{background:#dce6f1;border-right:1px solid #fff;border-bottom:1px solid #fff}
.dkb{background:#b8cce4;border-right:1px solid #fff;border-bottom:1px solid #fff}
.grip{position:relative}
.grip::after{content:"";position:absolute;right:1px;bottom:1px;width:2px;height:2px;background:#1f497d}
.selcell{position:relative;height:16px;margin-top:-1px;margin-left:-1px;border:2px solid #217346;width:47px}
.selcell::after{content:"";position:absolute;right:-4px;bottom:-4px;width:5px;height:5px;background:#217346;border:1px solid #fff}

.vscroll{width:21px;padding:1px 3px 0;display:flex;flex-direction:column}
.sbtn{height:16px;background:#fff;border:1px solid #9a9a9a;display:flex;align-items:center;justify-content:center;flex:none}
.ar-up{border:5px solid transparent;border-top:0;border-bottom:4px solid #333}
.ar-dn{border:5px solid transparent;border-bottom:0;border-top:4px solid #333}
.thumb{height:288px;background:#fff;border:1px solid #9a9a9a;flex:none}
.strack{flex:1;background:#f0f0f0}

/* sheet tabs */
.sheettabs{height:27px;display:flex;align-items:center;background:#e6e6e6;border-top:1px solid #9a9a9a;color:#555;letter-spacing:-.12px}
.navs{width:101px;display:flex;gap:24px;align-items:center;padding-left:26px;border-right:1px solid #9a9a9a;height:20px}
.nl{border:4px solid transparent;border-left:0;border-right:4px solid #c8c8c8}
.nr{border:4px solid transparent;border-right:0;border-left:4px solid #c8c8c8}
.st{display:flex;align-items:center;justify-content:center;height:20px;font-size:13px;padding-bottom:4px}
.st.first{width:88px;border-right:1px solid #a8a8a8}
.st:nth-child(3){width:64px}
.st.cur{width:78px;height:26px;background:#fff;color:#217346;font-weight:700;border-bottom:2px solid #217346;align-self:flex-start;padding-bottom:3px;letter-spacing:-.3px}
.plus{margin-left:33px}
.hdots{margin-left:432px;width:16px}
.hscroll{display:flex;height:15px;width:509px;margin-left:8px;flex:none}
.hbtn{width:15px;height:15px;background:#fff;border:1px solid #777;display:flex;align-items:center;justify-content:center;flex:none}
.ar-l{border:5px solid transparent;border-left:0;border-right:4px solid #222}
.ar-r{border:5px solid transparent;border-right:0;border-left:4px solid #222}
.hthumb{width:458px;background:#fff;border:1px solid #9a9a9a;border-left:0}
.htrack{width:21px;background:#f0f0f0}

/* status */
.status{height:22px;display:flex;align-items:center;background:#f3f3f3;border-top:1px solid #c8c8c8;color:#444;font-size:11px}
.ready{width:58px;padding-left:8px;letter-spacing:-.05px}
.acc{margin-left:18px}
.accs{margin-left:2px;width:958px;white-space:nowrap;letter-spacing:-.1px}
.views{display:flex;height:21px}
.vb{width:40px;display:flex;align-items:center;justify-content:center}
.vb.on{background:#c6c6c6}
.zoom{display:flex;align-items:center;margin-left:6px}
.zm{width:8px;height:1px;background:#444}
.ztrack{width:100px;height:1px;background:#444;margin:0 5px;display:flex;align-items:center;position:relative}
.zknob{position:absolute;left:32px;top:-6px;width:5px;height:12px;background:#444}
.ztick{position:absolute;left:50px;top:-2px;width:1px;height:5px;background:#444}
.zp{width:9px;height:9px;background:linear-gradient(#444,#444) 0 4px/9px 1px no-repeat,linear-gradient(#444,#444) 4px 0/1px 9px no-repeat}
.zoom span{margin-left:13px;letter-spacing:-.3px}
.foot{height:2px;background:#e6e8f6}

/* watermark */
.wm{position:absolute;left:598px;top:602px;width:170px;display:flex;flex-direction:column;align-items:center;color:rgba(90,90,90,.16);pointer-events:none;font-weight:700}
.wm-ar{font:700 50px/64px "DejaVu Sans",sans-serif}
.wm-en{font:700 27px/30px "Liberation Sans",sans-serif}
```
